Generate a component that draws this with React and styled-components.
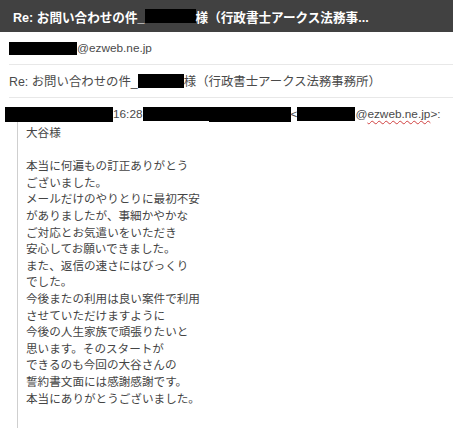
import React from 'react'
import styled, { createGlobalStyle } from 'styled-components'

const GlobalStyle = createGlobalStyle`
  body {
    margin: 0;
    background: #fff;
    font-family: "Liberation Sans", "Noto Sans CJK JP", sans-serif;
  }
`

const Page = styled.div`
  width: 453px;
  height: 428px;
  overflow: hidden;
  background: #fff;
`

const TitleBar = styled.header`
  height: 32px;
  background: #414141;
  color: #fff;
  display: flex;
  align-items: center;
  padding: 0 13px;
  font-size: 12.6px;
  font-weight: bold;
  white-space: nowrap;
`

const Row = styled.div`
  height: 32px;
  margin-left: 9px;
  border-bottom: 1px solid #e8e8e8;
  display: flex;
  align-items: center;
  font-size: 12.4px;
  color: #4a4a4a;
  white-space: nowrap;
`

const Latin = styled.span`
  font-size: 11.8px;
`

const Redact = styled.span`
  display: inline-block;
  flex-shrink: 0;
  width: ${p => p.w}px;
  height: ${p => p.h || 13}px;
  background: #000;
`

const QuoteHead = styled.div`
  margin-top: 8px;
  padding-left: 5px;
  height: 16px;
  display: flex;
  align-items: center;
  font-size: 11.8px;
  color: #4a4a4a;
  white-space: nowrap;
`

const Misspelt = styled.span`
  text-decoration: underline wavy #d04040;
  text-decoration-thickness: 1px;
  text-underline-offset: 2px;
`

const Quote = styled.blockquote`
  margin: 0 0 0 17px;
  border-left: 1px solid #cfcfcf;
  padding: 3px 0 40px 8px;
  font-size: 11.6px;
  line-height: 16.6px;
  color: #444;
`

const Line = styled.div`
  white-space: nowrap;
  min-height: 16.6px;
`

const body = [
  '大谷様',
  '',
  '本当に何遍もの訂正ありがとう',
  'ございました。',
  'メールだけのやりとりに最初不安',
  'がありましたが、事細かやかな',
  'ご対応とお気遣いをいただき',
  '安心してお願いできました。',
  'また、返信の速さにはびっくり',
  'でした。',
  '今後またの利用は良い案件で利用',
  'させていただけますように',
  '今後の人生家族で頑張りたいと',
  '思います。そのスタートが',
  'できるのも今回の大谷さんの',
  '誓約書文面には感謝感謝です。',
  '本当にありがとうございました。',
]

export default function App() {
  return (
    <Page>
      <GlobalStyle />
      <TitleBar>
        Re: お問い合わせの件_
        <Redact w={51} h={14} />
        様（行政書士アークス法務事...
      </TitleBar>
      <Row>
        <Redact w={68} h={13} />
        <Latin>@ezweb.ne.jp</Latin>
      </Row>
      <Row>
        Re: お問い合わせの件_
        <Redact w={46} h={14} />
        様（行政書士アークス法務事務所）
      </Row>
      <QuoteHead>
        <Redact w={108} h={15} />
        16:28
        <Redact w={66} h={14} />
        <Redact w={82} h={15} />
        &lt;
        <Redact w={58} h={14} />
        @<Misspelt>ezweb.ne.jp</Misspelt>&gt;:
      </QuoteHead>
      <Quote>
        {body.map((t, i) => (
          <Line key={i}>{t}</Line>
        ))}
      </Quote>
    </Page>
  )
}
